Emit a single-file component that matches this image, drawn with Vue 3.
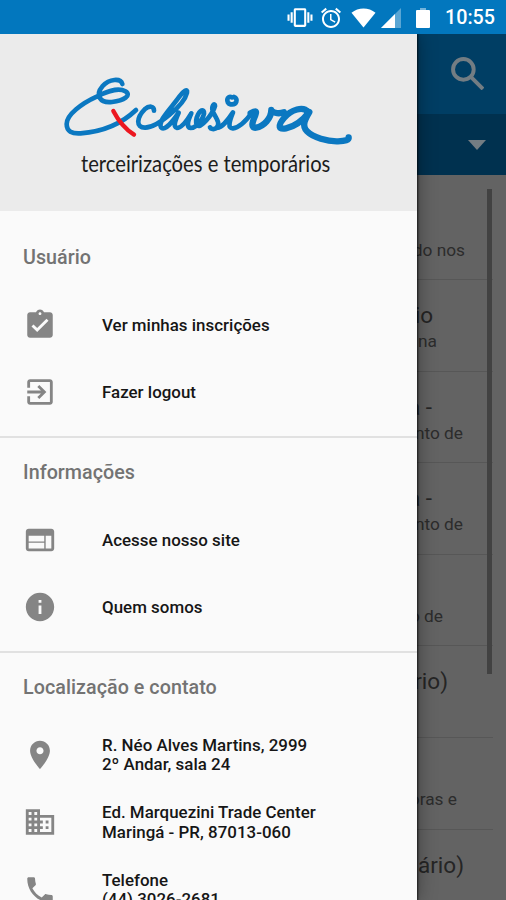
<script setup>
const sections = [
  {
    title: 'Usuário',
    items: [
      { icon: 'task', lines: ['Ver minhas inscrições'] },
      { icon: 'exit', lines: ['Fazer logout'] }
    ]
  },
  {
    title: 'Informações',
    items: [
      { icon: 'web', lines: ['Acesse nosso site'] },
      { icon: 'info', lines: ['Quem somos'] }
    ]
  },
  {
    title: 'Localização e contato',
    items: [
      { icon: 'place', lines: ['R. Néo Alves Martins, 2999', '2º Andar, sala 24'] },
      { icon: 'business', lines: ['Ed. Marquezini Trade Center', 'Maringá - PR, 87013-060'] },
      { icon: 'phone', lines: ['Telefone', '(44) 3026-2681'] }
    ]
  }
]

const icons = {
  task: 'M19 3h-4.18C14.4 1.84 13.3 1 12 1c-1.3 0-2.4.84-2.82 2H5c-1.1 0-2 .9-2 2v14c0 1.1.9 2 2 2h14c1.1 0 2-.9 2-2V5c0-1.1-.9-2-2-2zm-7 0c.55 0 1 .45 1 1s-.45 1-1 1-1-.45-1-1 .45-1 1-1zm-2 14l-4-4 1.41-1.41L10 14.17l6.59-6.59L18 9l-8 8z',
  exit: 'M10.09 15.59L11.5 17l5-5-5-5-1.41 1.41L12.67 11H3v2h9.67l-2.58 2.59zM19 3H5c-1.11 0-2 .9-2 2v4h2V5h14v14H5v-4H3v4c0 1.1.89 2 2 2h14c1.1 0 2-.9 2-2V5c0-1.1-.9-2-2-2z',
  web: 'M20 4H4c-1.1 0-1.99.9-1.99 2L2 18c0 1.1.9 2 2 2h16c1.1 0 2-.9 2-2V6c0-1.1-.9-2-2-2zm-5 14H4v-4h11v4zm0-5H4V9h11v4zm5 5h-4V9h4v9z',
  info: 'M12 2C6.48 2 2 6.48 2 12s4.48 10 10 10 10-4.48 10-10S17.52 2 12 2zm1 15h-2v-6h2v6zm0-8h-2V7h2v2z',
  place: 'M12 2C8.13 2 5 5.13 5 9c0 5.25 7 13 7 13s7-7.75 7-13c0-3.87-3.13-7-7-7zm0 9.5c-1.38 0-2.5-1.12-2.5-2.5s1.12-2.5 2.5-2.5 2.5 1.12 2.5 2.5-1.12 2.5-2.5 2.5z',
  business: 'M12 7V3H2v18h20V7H12zM6 19H4v-2h2v2zm0-4H4v-2h2v2zm0-4H4V9h2v2zm0-4H4V5h2v2zm4 12H8v-2h2v2zm0-4H8v-2h2v2zm0-4H8V9h2v2zm0-4H8V5h2v2zm10 12h-8v-2h2v-2h-2v-2h2v-2h-2V9h8v10zm-2-8h-2v2h2v-2zm0 4h-2v2h2v-2z',
  phone: 'M6.62 10.79c1.44 2.83 3.76 5.14 6.59 6.59l2.2-2.2c.27-.27.67-.36 1.02-.24 1.12.37 2.33.57 3.57.57.55 0 1 .45 1 1V20c0 .55-.45 1-1 1-9.39 0-17-7.61-17-17 0-.55.45-1 1-1h3.5c.55 0 1 .45 1 1 0 1.25.2 2.45.57 3.57.11.35.03.74-.25 1.02l-2.2 2.2z'
}

// inset: distance from the right edge to the end of the text
const jobs = [
  { title: '', titleInset: 0, sub: 'do nos', subInset: 41 },
  { title: 'io', titleInset: 73, sub: 'na', subInset: 69 },
  { title: 'a -', titleInset: 74, sub: 'nto de', subInset: 43 },
  { title: 'a -', titleInset: 74, sub: 'nto de', subInset: 43 },
  { title: '', titleInset: 0, sub: 'o de', subInset: 63 },
  { title: 'rio)', titleInset: 58, sub: '', subInset: 0 },
  { title: '', titleInset: 0, sub: 'oras e', subInset: 49 },
  { title: 'ário)', titleInset: 42, sub: '', subInset: 0 }
]
</script>

<template>
  <div class="screen">
    <header class="status">
      <svg class="s-vibrate" viewBox="0 0 24 24"><path d="M0 15h2V9H0v6zm3 2h2V7H3v10zm19-8v6h2V9h-2zm-3 8h2V7h-2v10zM16.500 3h-9C6.670 3 6 3.670 6 4.500v15c0 .83.67 1.500 1.500 1.500h9c.83 0 1.500-.67 1.500-1.500v-15c0-.83-.67-1.500-1.500-1.500zM16 19H8V5h8v14z" /></svg>
      <svg class="s-alarm" viewBox="0 0 24 24"><path d="M22 5.720l-4.600-3.860-1.290 1.530 4.600 3.860L22 5.720zM7.880 3.390L6.600 1.860 2 5.710l1.290 1.530 4.590-3.850zM12.500 8H11v6l4.750 2.850.75-1.230-4-2.370V8zM12 4c-4.970 0-9 4.030-9 9s4.020 9 9 9c4.970 0 9-4.030 9-9s-4.030-9-9-9zm0 16c-3.870 0-7-3.130-7-7s3.130-7 7-7 7 3.130 7 7-3.130 7-7 7z" /></svg>
      <svg class="s-wifi" viewBox="0 0 26 20"><path d="M13 20L.5 4.500C4 1.500 8.500 0 13 0s9 1.500 12.500 4.500z" /></svg>
      <svg class="s-signal" viewBox="0 0 20 20"><path opacity=".35" d="M0 20L20 0v20z" /><path d="M0 20L14 6v14z" /></svg>
      <svg class="s-battery" viewBox="0 0 14 20"><path opacity=".45" d="M4 0h6v2H4z" /><path d="M1 2h12q1 0 1 1v16q0 1-1 1H1q-1 0-1-1V3q0-1 1-1z" /></svg>
      <span class="clock">10:55</span>
    </header>

    <div class="body">
      <main class="page">
        <div class="appbar">
          <svg class="search" viewBox="0 0 32 32"><circle cx="12" cy="12" r="10" /><path d="M19.500 19.500L31 31" /></svg>
        </div>
        <div class="filter">
          <svg class="caret" viewBox="0 0 18 10"><path d="M0 0h18l-9 10z" /></svg>
        </div>
        <div class="jobs">
          <div v-for="(job, i) in jobs" :key="i" class="job">
            <div class="job-title" :style="{ paddingRight: job.titleInset + 'px' }">{{ job.title }}</div>
            <div class="job-sub" :style="{ paddingRight: job.subInset + 'px' }">{{ job.sub }}</div>
          </div>
          <div class="scrollbar"></div>
        </div>
      </main>

      <aside class="drawer">
        <div class="brand">
          <svg class="logo" viewBox="0 0 960 390">
            <g class="ink">
              <path d="M217 72C212 54 178 56 158 78C134 106 150 130 186 126C222 122 246 106 226 94C202 80 164 98 140 110C96 130 50 164 50 192C50 214 66 222 92 220C146 216 210 196 258 150" />
              <path d="M312 152C312 138 298 136 284 148C260 172 256 204 286 203C322 202 402 136 411 98C414 84 400 93 388 110C364 144 322 184 333 202C344 216 370 182 386 158C376 180 368 202 381 204C396 204 412 180 424 160C414 182 408 202 422 204C442 204 470 162 460 152C450 146 434 176 440 194C450 212 488 162 495 138C495 126 482 138 489 156C499 176 512 190 500 203C492 211 482 206 480 202" />
              <path d="M500 204C520 202 536 177 549 157C538 184 532 206 549 205C569 203 590 180 606 158" />
              <path d="M546 112C530 104 526 130 542 133C560 136 566 116 552 111" />
              <path class="bold" d="M602 160C616 152 622 150 615 168C606 189 602 205 618 203C642 199 664 174 664 150C666 156 682 164 702 157" />
              <path class="bold" d="M774 156C760 138 724 148 702 174C682 198 686 209 708 205C738 199 764 174 778 156C766 176 754 197 771 214C790 233 832 245 864 244C886 243 897 240 896 232" />
            </g>
            <path class="slash" d="M190 153C204 180 222 205 252 224" />
            <text class="tagline" x="93" y="336" textLength="748" lengthAdjust="spacingAndGlyphs">terceirizações e temporários</text>
          </svg>
        </div>
        <section v-for="section in sections" :key="section.title" class="section">
          <h2>{{ section.title }}</h2>
          <div v-for="item in section.items" :key="item.icon" class="item">
            <svg class="icon" viewBox="0 0 24 24"><path :d="icons[item.icon]" /></svg>
            <div class="label">
              <div v-for="line in item.lines" :key="line">{{ line }}</div>
            </div>
          </div>
        </section>
      </aside>
    </div>
  </div>
</template>

<style>
body {
  margin: 0;
  overflow: hidden;
}
</style>

<style scoped>
.screen {
  width: 506px;
  height: 900px;
  overflow: hidden;
  display: flex;
  flex-direction: column;
  font-family: Roboto, "Liberation Sans", sans-serif;
}
.status {
  height: 34px;
  flex: none;
  box-sizing: border-box;
  background: #0277be;
  display: flex;
  align-items: center;
  justify-content: flex-end;
  padding: 1px 11px 0 0;
}
.status svg {
  fill: #fff;
  flex: none;
}
.s-vibrate { width: 26px; height: 25px; margin-right: 6px; }
.s-alarm { width: 24px; height: 24px; margin-right: 8px; }
.s-wifi { width: 25px; height: 20px; margin-right: 5px; }
.s-signal { width: 20px; height: 20px; margin-right: 15px; }
.s-battery { width: 14px; height: 20px; margin-right: 15px; }
.clock {
  color: #fff;
  font-size: 19.700px;
  font-weight: 500;
  line-height: 32px;
  padding-top: 1px;
}
.body {
  flex: 1;
  min-height: 0;
  position: relative;
  overflow: hidden;
}
.page {
  height: 100%;
  background: #636363;
}
.appbar {
  height: 80px;
  background: #003e64;
  box-sizing: border-box;
  padding: 23px 22px 0 0;
  display: flex;
  justify-content: flex-end;
}
.search {
  width: 33px;
  height: 33px;
  fill: none;
  stroke: #737d83;
  stroke-width: 3.800;
}
.filter {
  height: 61px;
  background: #00314f;
  display: flex;
  align-items: center;
  justify-content: flex-end;
  padding-right: 20px;
}
.caret {
  width: 18px;
  height: 10px;
  fill: #737d83;
}
.jobs {
  position: relative;
  padding-top: 13.500px;
}
.job {
  height: 91.600px;
  box-sizing: border-box;
  border-bottom: 1px solid #575757;
  margin-right: 13px;
  padding-top: 21px;
  text-align: right;
  white-space: nowrap;
}
.job-title,
.job-sub {
  box-sizing: border-box;
  margin-right: -13px;
}
.job-title {
  height: 28px;
  line-height: 28px;
  font-size: 22.500px;
  color: #252525;
}
.job-sub {
  height: 24px;
  line-height: 25px;
  font-size: 17.300px;
  color: #2c2c2c;
}
.scrollbar {
  position: absolute;
  top: 14px;
  right: 14px;
  width: 5px;
  height: 485px;
  background: #424242;
}
.drawer {
  position: absolute;
  top: 0;
  left: 0;
  width: 417px;
  height: 100%;
  overflow: hidden;
  background: #fafafa;
  box-shadow: 0 0 2px 1px rgba(0, 0, 0, 0.7), 0 0 18px rgba(0, 0, 0, 0.4);
}
.brand {
  height: 177px;
  box-sizing: border-box;
  padding: 26px 0 0 50px;
  background: #ebebeb;
}
.logo {
  display: block;
  width: 320px;
  height: 130px;
}
.ink path,
.slash {
  fill: none;
  stroke: #0b78c1;
  stroke-width: 14;
  stroke-linecap: round;
  stroke-linejoin: round;
}
.ink .bold {
  stroke-width: 19;
}
.logo .slash {
  stroke: #ec1720;
  stroke-width: 13;
}
.tagline {
  font-family: Lato, sans-serif;
  font-size: 70px;
  fill: #1c1c1c;
}
.section {
  height: 215px;
  box-sizing: border-box;
  padding-top: 11px;
}
.section:first-of-type {
  height: 225px;
  padding-top: 23px;
}
.section + .section {
  border-top: 2px solid #e1e1e1;
}
h2 {
  margin: 0;
  padding-left: 23px;
  height: 57px;
  line-height: 48px;
  font-size: 19.700px;
  font-weight: 500;
  letter-spacing: 0.050px;
  color: #737373;
}
.item {
  height: 67.500px;
  display: flex;
  align-items: center;
}
.icon {
  width: 34px;
  height: 34px;
  margin-left: 23px;
  flex: none;
  fill: #858585;
}
.label {
  margin-left: 45px;
  padding-top: 1.400px;
  font-size: 16.900px;
  line-height: 19.700px;
  font-weight: 500;
  letter-spacing: 0.020px;
  color: #161616;
  white-space: nowrap;
}
</style>
